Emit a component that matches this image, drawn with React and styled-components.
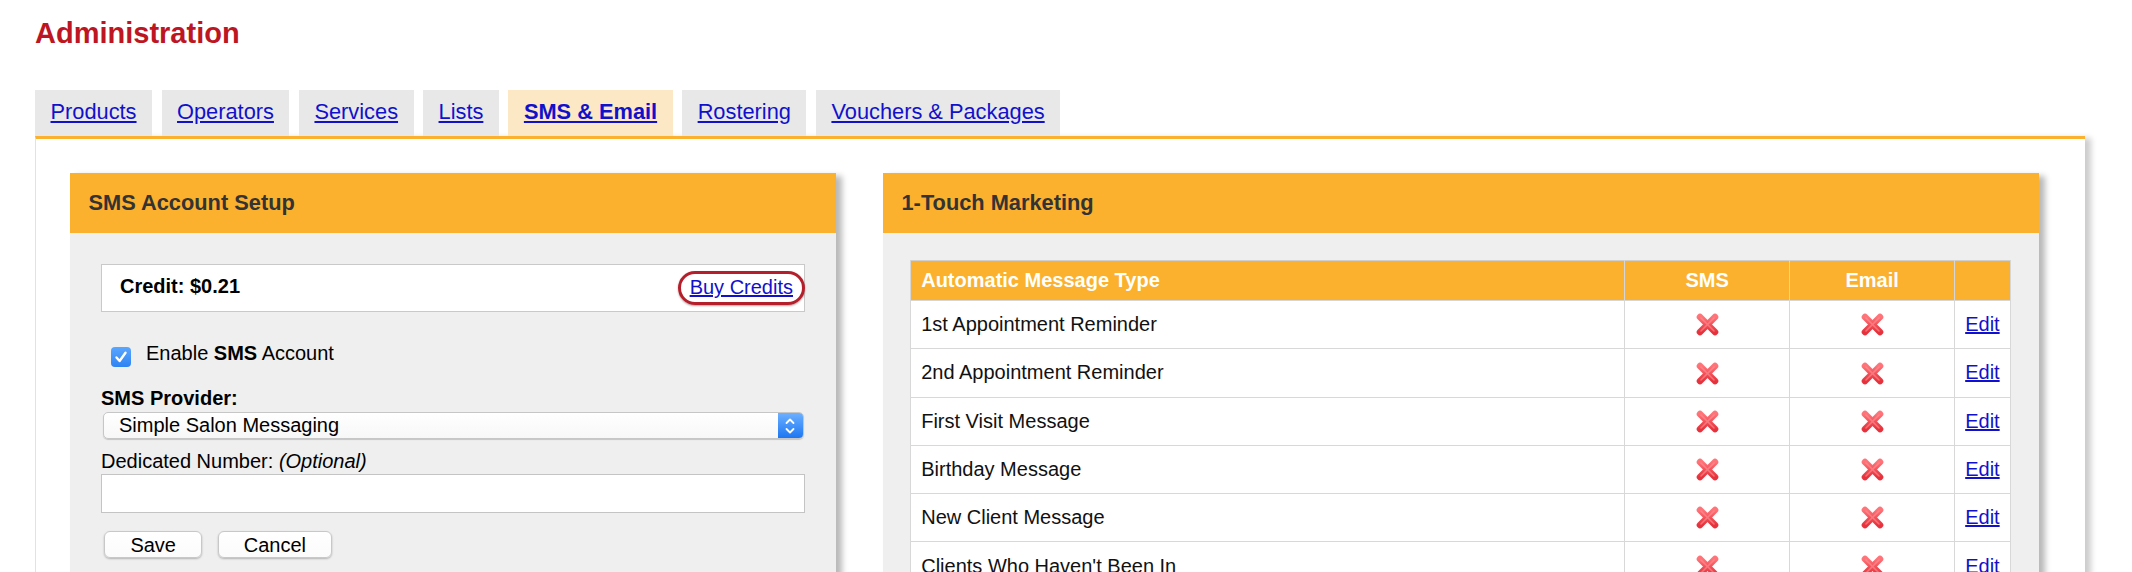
import React from "react";
import styled, { createGlobalStyle } from "styled-components";

const ORANGE = "#fbb12e";
const LINK = "#1111cc";
const FONT = '"Liberation Sans", Arial, Helvetica, sans-serif';

const Global = createGlobalStyle`
  html, body { margin: 0; padding: 0; background: #fff; }
  body { font-family: ${FONT}; color: #000; }
  * { box-sizing: border-box; }
`;

const Page = styled.div`
  padding: 0 47px 0 35px;
`;

const Title = styled.h1`
  margin: 0;
  padding-top: 16px;
  font-size: 29px;
  line-height: 34px;
  font-weight: bold;
  color: #bd1622;
`;

const TabBar = styled.nav`
  display: flex;
  gap: 9.5px;
  margin-top: 40px;
  height: 46px;
`;

const Tab = styled.a`
  display: block;
  height: 46px;
  line-height: 44px;
  padding: 0 15.5px;
  font-size: 21.8px;
  font-weight: ${(p) => (p.$active ? "bold" : "normal")};
  background: ${(p) => (p.$active ? "#fde8c5" : "#e8e8e8")};
  color: ${LINK};
  text-decoration: underline;
  text-underline-offset: 2px;
  cursor: pointer;
`;

const Container = styled.div`
  border-top: 3px solid ${ORANGE};
  border-left: 1px solid #e2e2e2;
  background: #fff;
  box-shadow: 6px 2px 6px rgba(0, 0, 0, 0.2);
  padding: 34px 0 40px 34px;
  display: flex;
  align-items: flex-start;
  gap: 47px;
  min-height: 500px;
`;

const Panel = styled.section`
  width: ${(p) => p.$w}px;
  background: #efefef;
  box-shadow: 6px 3px 6px rgba(0, 0, 0, 0.28);
`;

const PanelHeader = styled.h2`
  margin: 0;
  height: 60px;
  display: flex;
  align-items: center;
  padding-left: 18.5px;
  background: ${ORANGE};
  color: #333;
  font-size: 21.8px;
  font-weight: bold;
`;

const PanelBody = styled.div`
  padding: ${(p) => p.$pad};
`;

const CreditBox = styled.div`
  height: 48px;
  background: #fff;
  border: 1.5px solid #c9c9c9;
  display: flex;
  align-items: center;
  justify-content: space-between;
  padding: 0 0 4px 18px;
`;

const Credit = styled.span`
  font-size: 20px;
  font-weight: bold;
  color: #000;
`;

const BuyLink = styled.a`
  font-size: 20px;
  color: ${LINK};
  text-decoration: underline;
  border: 3px solid #b51f2b;
  border-radius: 17px;
  height: 34px;
  line-height: 27px;
  padding: 0 9px;
  margin-top: 4px;
  margin-right: -1px;
  box-shadow: 0 1px 2px rgba(0, 0, 0, 0.35);
  cursor: pointer;
`;

const CheckRow = styled.label`
  display: flex;
  align-items: flex-start;
  gap: 15px;
  margin-top: 29.7px;
  padding-left: 10px;
  font-size: 20px;
  line-height: 23px;
`;

const CheckBox = styled.span`
  width: 20px;
  height: 20px;
  margin-top: 4.7px;
  border-radius: 4px;
  background: linear-gradient(#5aa6ff, #2e83f3);
  display: flex;
  align-items: center;
  justify-content: center;
  flex: none;
`;

const FieldLabel = styled.div`
  font-size: 20px;
  line-height: 23px;
  font-weight: ${(p) => (p.$bold ? "bold" : "normal")};
  margin-top: ${(p) => p.$mt}px;
`;

const SelectWrap = styled.div`
  display: flex;
  height: 26.6px;
  margin: 2px 1.5px 0 1.5px;
  border: 1px solid #c6c6c6;
  border-radius: 5px;
  background: linear-gradient(#ffffff, #f7f7f7);
  box-shadow: 0 1px 1px rgba(0, 0, 0, 0.18);
  overflow: hidden;
`;

const Select = styled.select`
  appearance: none;
  -webkit-appearance: none;
  flex: 1;
  border: none;
  background: transparent;
  font-family: ${FONT};
  font-size: 20px;
  line-height: 23px;
  padding: 0 0 0 15.5px;
  color: #000;
  outline: none;
`;

const Stepper = styled.span`
  width: 24.5px;
  flex: none;
  background: linear-gradient(#6cb0ff, #1d77f2);
  display: flex;
  align-items: center;
  justify-content: center;
`;

const TextInput = styled.input`
  display: block;
  width: 100%;
  height: 39px;
  margin-top: 1.4px;
  border: 1.5px solid #c4c4c4;
  background: #fff;
  font-family: ${FONT};
  font-size: 20px;
  padding: 0 8px;
  outline: none;
`;

const ButtonRow = styled.div`
  display: flex;
  gap: 15.8px;
  margin-top: 17.6px;
  padding-left: 3.4px;
`;

const Button = styled.button`
  height: 27.4px;
  padding: 0 25px;
  font-family: ${FONT};
  font-size: 20px;
  color: #000;
  background: linear-gradient(#ffffff, #fbfbfb);
  border: 1px solid #c8c8c8;
  border-radius: 6px;
  box-shadow: 0 1px 2px rgba(0, 0, 0, 0.25);
  line-height: 24px;
  cursor: pointer;
`;

const Table = styled.table`
  width: 100%;
  border-collapse: collapse;
  table-layout: fixed;
  border: 1px solid #cfcfcf;
  font-size: 20px;
`;

const HeadRow = styled.tr`
  height: 40px;
  background: ${ORANGE};
`;

const Th = styled.th`
  color: #fff;
  font-weight: bold;
  text-align: ${(p) => p.$align || "left"};
  padding: 0 10px;
  border: 1px solid #d6d6d6;
  border-top: none;
`;

const Row = styled.tr`
  height: 48.3px;
  background: #fff;
`;

const Td = styled.td`
  padding: 0 10px;
  text-align: ${(p) => p.$align || "left"};
  border: 1px solid #d8d8d8;
  color: #111;
`;

const EditLink = styled.a`
  color: ${LINK};
  text-decoration: underline;
  cursor: pointer;
`;

const IconWrap = styled.span`
  display: inline-flex;
  vertical-align: middle;
`;

const XIcon = ({ id }) => (
  <IconWrap>
    <svg width="25" height="25" viewBox="0 0 25 25">
      <defs>
        <linearGradient id={id} x1="0" y1="0" x2="0" y2="1">
          <stop offset="0" stopColor="#ff7479" />
          <stop offset="1" stopColor="#e6323c" />
        </linearGradient>
      </defs>
      <g stroke={`url(#${id})`} strokeWidth="6.6" strokeLinecap="round">
        <line x1="5" y1="5" x2="20" y2="20" />
        <line x1="20" y1="5" x2="5" y2="20" />
      </g>
      <g stroke="#ff9a9c" strokeWidth="1.6" strokeLinecap="round" opacity="0.55">
        <line x1="6" y1="6" x2="19" y2="19" />
        <line x1="19" y1="6" x2="6" y2="19" />
      </g>
    </svg>
  </IconWrap>
);

const tabs = [
  "Products",
  "Operators",
  "Services",
  "Lists",
  "SMS & Email",
  "Rostering",
  "Vouchers & Packages",
];

const messages = [
  "1st Appointment Reminder",
  "2nd Appointment Reminder",
  "First Visit Message",
  "Birthday Message",
  "New Client Message",
  "Clients Who Haven't Been In",
];

export default function App() {
  return (
    <Page>
      <Global />
      <Title>Administration</Title>
      <TabBar>
        {tabs.map((t) => (
          <Tab key={t} $active={t === "SMS & Email"}>
            {t}
          </Tab>
        ))}
      </TabBar>
      <Container>
        <Panel $w={766}>
          <PanelHeader>SMS Account Setup</PanelHeader>
          <PanelBody $pad="31.3px 31px 60px 31px">
            <CreditBox>
              <Credit>Credit: $0.21</Credit>
              <BuyLink>Buy Credits</BuyLink>
            </CreditBox>
            <CheckRow>
              <CheckBox>
                <svg width="14" height="14" viewBox="0 0 14 14">
                  <path
                    d="M2.5 7.5 L5.6 11 L11.5 2.8"
                    fill="none"
                    stroke="#fff"
                    strokeWidth="2.4"
                    strokeLinecap="round"
                    strokeLinejoin="round"
                  />
                </svg>
              </CheckBox>
              <span>
                Enable <b>SMS</b> Account
              </span>
            </CheckRow>
            <FieldLabel $bold $mt={20.6}>
              SMS Provider:
            </FieldLabel>
            <SelectWrap>
              <Select defaultValue="ssm">
                <option value="ssm">Simple Salon Messaging</option>
              </Select>
              <Stepper>
                <svg width="12" height="20" viewBox="0 0 12 20">
                  <path
                    d="M2.5 7 L6 3.5 L9.5 7 M2.5 13 L6 16.5 L9.5 13"
                    fill="none"
                    stroke="#fff"
                    strokeWidth="1.8"
                    strokeLinecap="round"
                    strokeLinejoin="round"
                  />
                </svg>
              </Stepper>
            </SelectWrap>
            <FieldLabel $mt={11}>
              Dedicated Number: <i>(Optional)</i>
            </FieldLabel>
            <TextInput type="text" />
            <ButtonRow>
              <Button>Save</Button>
              <Button>Cancel</Button>
            </ButtonRow>
          </PanelBody>
        </Panel>
        <Panel $w={1156}>
          <PanelHeader>1-Touch Marketing</PanelHeader>
          <PanelBody $pad="27px 29.5px 30px 27.2px">
            <Table>
              <colgroup>
                <col style={{ width: 714 }} />
                <col style={{ width: 165 }} />
                <col style={{ width: 165 }} />
                <col style={{ width: 56 }} />
              </colgroup>
              <thead>
                <HeadRow>
                  <Th>Automatic Message Type</Th>
                  <Th $align="center">SMS</Th>
                  <Th $align="center">Email</Th>
                  <Th />
                </HeadRow>
              </thead>
              <tbody>
                {messages.map((m, i) => (
                  <Row key={m}>
                    <Td>{m}</Td>
                    <Td $align="center">
                      <XIcon id={`xs${i}`} />
                    </Td>
                    <Td $align="center">
                      <XIcon id={`xe${i}`} />
                    </Td>
                    <Td>
                      <EditLink>Edit</EditLink>
                    </Td>
                  </Row>
                ))}
              </tbody>
            </Table>
          </PanelBody>
        </Panel>
      </Container>
    </Page>
  );
}
